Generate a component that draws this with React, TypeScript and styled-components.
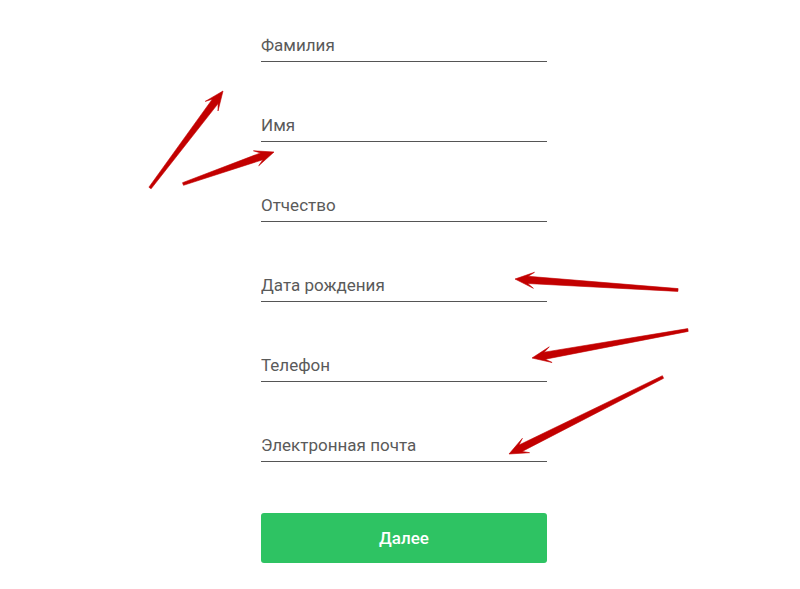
import React from "react";
import styled, { createGlobalStyle } from "styled-components";

const GlobalStyle = createGlobalStyle`
  html, body {
    margin: 0;
    padding: 0;
    background: #ffffff;
  }
  body {
    font-family: Roboto, "Liberation Sans", Arial, sans-serif;
  }
`;

type Point = [number, number];

const fields = [
  "Фамилия",
  "Имя",
  "Отчество",
  "Дата рождения",
  "Телефон",
  "Электронная почта",
];

// tail -> head of every red hand-drawn arrow
const arrows: [Point, Point][] = [
  [[150, 188], [223, 91]],
  [[183, 184], [274, 152]],
  [[678, 290], [515, 279]],
  [[688, 330], [532, 358]],
  [[663, 377], [509, 454]],
];

const arrowPoints = ([tx, ty]: Point, [hx, hy]: Point) => {
  const len = Math.hypot(hx - tx, hy - ty);
  const dx = (hx - tx) / len;
  const dy = (hy - ty) / len;
  const nx = -dy;
  const ny = dx;
  const headLen = 17;
  const headHalf = 8;
  const bx = hx - dx * headLen;
  const by = hy - dy * headLen;
  const neckX = hx - dx * (headLen - 4);
  const neckY = hy - dy * (headLen - 4);
  const pts: Point[] = [
    [tx + nx * 1.4, ty + ny * 1.4],
    [neckX + nx * 3.6, neckY + ny * 3.6],
    [bx - dx * 2 + nx * headHalf, by - dy * 2 + ny * headHalf],
    [hx, hy],
    [bx - dx * 2 - nx * headHalf, by - dy * 2 - ny * headHalf],
    [neckX - nx * 3.6, neckY - ny * 3.6],
    [tx - nx * 1.4, ty - ny * 1.4],
  ];
  return pts.map((p) => p.map((v) => v.toFixed(1)).join(",")).join(" ");
};

const App = () => {
  return (
    <Page>
      <GlobalStyle />
      <Form>
        {fields.map((label) => (
          <Field key={label}>
            <FieldInput placeholder={label} />
          </Field>
        ))}
        <SubmitButton type="button">Далее</SubmitButton>
      </Form>
      <ArrowLayer width="800" height="589" viewBox="0 0 800 589">
        {arrows.map(([tail, head], i) => (
          <polygon
            key={i}
            points={arrowPoints(tail, head)}
            fill="#c20000"
            stroke="#c20000"
            strokeWidth="0.6"
            strokeLinejoin="round"
          />
        ))}
      </ArrowLayer>
    </Page>
  );
};

const Page = styled.div`
  position: relative;
  width: 800px;
  height: 589px;
  overflow: hidden;
`;

const Form = styled.form`
  display: flex;
  flex-direction: column;
  gap: 53px;
  width: 286px;
  margin-left: 261px;
  padding-top: 35px;
`;

const Field = styled.div`
  border-bottom: 1px solid #555555;
  padding-bottom: 6px;
`;

const FieldInput = styled.input`
  display: block;
  width: 100%;
  border: none;
  outline: none;
  padding: 0;
  margin: 0;
  background: transparent;
  font-family: Roboto, "Liberation Sans", Arial, sans-serif;
  font-size: 17px;
  line-height: 20px;
  height: 20px;
  color: #5a5a5a;

  &::placeholder {
    color: #5a5a5a;
    opacity: 1;
  }
`;

const SubmitButton = styled.button`
  margin-top: -2px;
  height: 50px;
  width: 100%;
  border: none;
  border-radius: 3px;
  background: #2ec363;
  color: #ffffff;
  font-family: Roboto, "Liberation Sans", Arial, sans-serif;
  font-size: 17px;
  font-weight: 500;
  cursor: pointer;
`;

const ArrowLayer = styled.svg`
  position: absolute;
  left: 0;
  top: 0;
  pointer-events: none;
`;

export default App;
